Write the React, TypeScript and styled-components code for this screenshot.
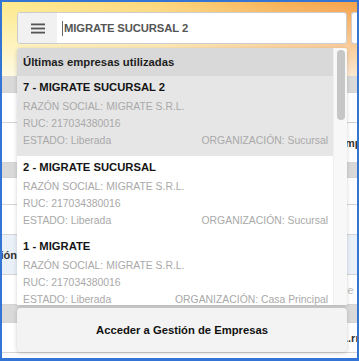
import React from "react";
import styled, { createGlobalStyle } from "styled-components";

const GlobalStyle = createGlobalStyle`
  * { box-sizing: border-box; }
  body {
    margin: 0;
    font-family: "Liberation Sans", Arial, sans-serif;
  }
`;

const Screen = styled.div`
  position: relative;
  width: 359px;
  height: 361px;
  overflow: hidden;
  border: 2px solid #3474d4;
  border-bottom-width: 3px;
  background: #ffffff;
  display: flex;
  flex-direction: column;
`;

const AppHeader = styled.div`
  height: 74px;
  flex: 0 0 auto;
  background:
    linear-gradient(to bottom, rgba(255, 255, 255, 0) 0%, rgba(255, 255, 255, 0.75) 100%),
    linear-gradient(to right, #fdeb8e 0%, #fcd67a 45%, #f7b055 80%, #f5a24a 100%);
  display: flex;
  justify-content: flex-end;
  padding-top: 10px;
`;

const HeaderBox = styled.div`
  width: 6px;
  height: 32px;
  background: #ffffff;
  border: 1px solid #cfcfcf;
  border-right: none;
  border-radius: 3px 0 0 3px;
`;

interface IRow {
  tone: "grey" | "white" | "blue";
  h: number;
}

const Row = styled.div<IRow>`
  height: ${p => p.h}px;
  flex: 0 0 auto;
  display: grid;
  grid-template-columns: 15px 1fr 12px;
  align-items: center;
  border-bottom: 1px solid #d4d4d4;
  background: ${p =>
    p.tone === "grey" ? "#d9d9d9" : p.tone === "blue" ? "#eaf0f8" : "#ffffff"};
`;

const EdgeLeft = styled.div`
  overflow: hidden;
  white-space: nowrap;
  display: flex;
  justify-content: flex-end;
  font-size: 11px;
  font-weight: bold;
  color: #333;
`;

interface IEdge {
  faded?: boolean;
}

const EdgeRight = styled.div<IEdge>`
  overflow: hidden;
  white-space: nowrap;
  font-size: 11px;
  font-weight: ${p => (p.faded ? "normal" : "bold")};
  color: ${p => (p.faded ? "#bbbbbb" : "#333")};
`;

const Overlay = styled.div`
  position: absolute;
  top: 10px;
  left: 15px;
  width: 330px;
  display: flex;
  flex-direction: column;
`;

const SearchBar = styled.div`
  height: 32px;
  display: flex;
  background: #ffffff;
  border: 1px solid #cccccc;
  border-radius: 3px;
  overflow: hidden;
`;

const MenuButton = styled.div`
  width: 39px;
  background: #f1f1f1;
  display: flex;
  align-items: center;
  justify-content: center;
`;

const SearchInput = styled.div`
  flex: 1;
  display: flex;
  align-items: center;
  padding-left: 5px;
  font-size: 11.25px;
  font-weight: bold;
  color: #555555;
  letter-spacing: -0.1px;
`;

const Caret = styled.span`
  width: 1px;
  height: 15px;
  background: #666;
  margin-right: 1px;
`;

const Dropdown = styled.div`
  margin-top: 4px;
  height: 257px;
  display: flex;
  background: #ffffff;
  border-radius: 3px 3px 0 0;
  box-shadow: 0 1px 4px rgba(0, 0, 0, 0.18);
  overflow: hidden;
`;

const ListBody = styled.div`
  flex: 1;
  display: flex;
  flex-direction: column;
  overflow: hidden;
`;

const ListHeader = styled.div`
  height: 28px;
  flex: 0 0 auto;
  background: #d9d9d9;
  display: flex;
  align-items: center;
  padding-left: 6px;
  font-size: 11.3px;
  font-weight: bold;
  color: #1e1e1e;
`;

interface IItem {
  active?: boolean;
}

const Item = styled.div<IItem>`
  height: 79.5px;
  flex: 0 0 auto;
  padding: 4px 5px 0 6px;
  background: ${p => (p.active ? "#e6e6e6" : "#ffffff")};
`;

const ItemTitle = styled.div`
  height: 15px;
  line-height: 15px;
  margin-bottom: 3px;
  font-size: 11.25px;
  font-weight: bold;
  color: #151515;
`;

const ItemLine = styled.div`
  height: 17px;
  line-height: 17px;
  display: flex;
  justify-content: space-between;
  font-size: 10.4px;
  color: #a9a9a9;
  white-space: nowrap;
`;

const ScrollTrack = styled.div`
  width: 14px;
  flex: 0 0 auto;
  background: #f8f8f8;
  border-left: 1px solid #efefef;
  padding: 2px 2px 0 3px;
`;

const ScrollThumb = styled.div`
  height: 70px;
  border-radius: 4px;
  background: #c6c6c6;
`;

const Footer = styled.div`
  margin-top: 3px;
  height: 44px;
  background: #f3f3f3;
  border-radius: 4px;
  box-shadow: 0 1px 4px rgba(0, 0, 0, 0.2);
  display: flex;
  align-items: center;
  justify-content: center;
  font-size: 11.25px;
  font-weight: bold;
  color: #111;
`;

const HamburgerIcon = () => (
  <svg width="14" height="11" viewBox="0 0 14 11">
    <rect x="0" y="0.5" width="14" height="1.8" fill="#555" />
    <rect x="0" y="4.6" width="14" height="1.8" fill="#555" />
    <rect x="0" y="8.7" width="14" height="1.8" fill="#555" />
  </svg>
);

const companies = [
  { id: 7, name: "MIGRATE SUCURSAL 2", org: "Sucursal" },
  { id: 2, name: "MIGRATE SUCURSAL", org: "Sucursal" },
  { id: 1, name: "MIGRATE", org: "Casa Principal" },
];

const App = () => {
  return (
    <>
      <GlobalStyle />
      <Screen>
        <AppHeader>
          <HeaderBox />
        </AppHeader>
        <Row tone="grey" h={17}>
          <EdgeLeft />
          <div />
          <EdgeRight />
        </Row>
        <Row tone="white" h={30}>
          <EdgeLeft />
          <div />
          <EdgeRight />
        </Row>
        <Row tone="white" h={40}>
          <EdgeLeft />
          <div />
          <EdgeRight>mpresa</EdgeRight>
        </Row>
        <Row tone="grey" h={15}>
          <EdgeLeft />
          <div />
          <EdgeRight />
        </Row>
        <Row tone="white" h={27}>
          <EdgeLeft />
          <div />
          <EdgeRight />
        </Row>
        <Row tone="white" h={30}>
          <EdgeLeft />
          <div />
          <EdgeRight />
        </Row>
        <Row tone="blue" h={40}>
          <EdgeLeft>Versión</EdgeLeft>
          <div />
          <EdgeRight />
        </Row>
        <Row tone="white" h={30}>
          <EdgeLeft />
          <div />
          <EdgeRight faded>ie</EdgeRight>
        </Row>
        <Row tone="grey" h={18}>
          <EdgeLeft />
          <div />
          <EdgeRight />
        </Row>
        <Row tone="white" h={30}>
          <EdgeLeft />
          <div />
          <EdgeRight>..rri</EdgeRight>
        </Row>

        <Overlay>
          <SearchBar>
            <MenuButton>
              <HamburgerIcon />
            </MenuButton>
            <SearchInput>
              <Caret />
              MIGRATE SUCURSAL 2
            </SearchInput>
          </SearchBar>

          <Dropdown>
            <ListBody>
              <ListHeader>Últimas empresas utilizadas</ListHeader>
              {companies.map((c, index) => (
                <Item active={index === 0} key={c.id}>
                  <ItemTitle>
                    {c.id} - {c.name}
                  </ItemTitle>
                  <ItemLine>RAZÓN SOCIAL: MIGRATE S.R.L.</ItemLine>
                  <ItemLine>RUC: 217034380016</ItemLine>
                  <ItemLine>
                    <span>ESTADO: Liberada</span>
                    <span>ORGANIZACIÓN: {c.org}</span>
                  </ItemLine>
                </Item>
              ))}
            </ListBody>
            <ScrollTrack>
              <ScrollThumb />
            </ScrollTrack>
          </Dropdown>

          <Footer>Acceder a Gestión de Empresas</Footer>
        </Overlay>
      </Screen>
    </>
  );
};

export default App;
